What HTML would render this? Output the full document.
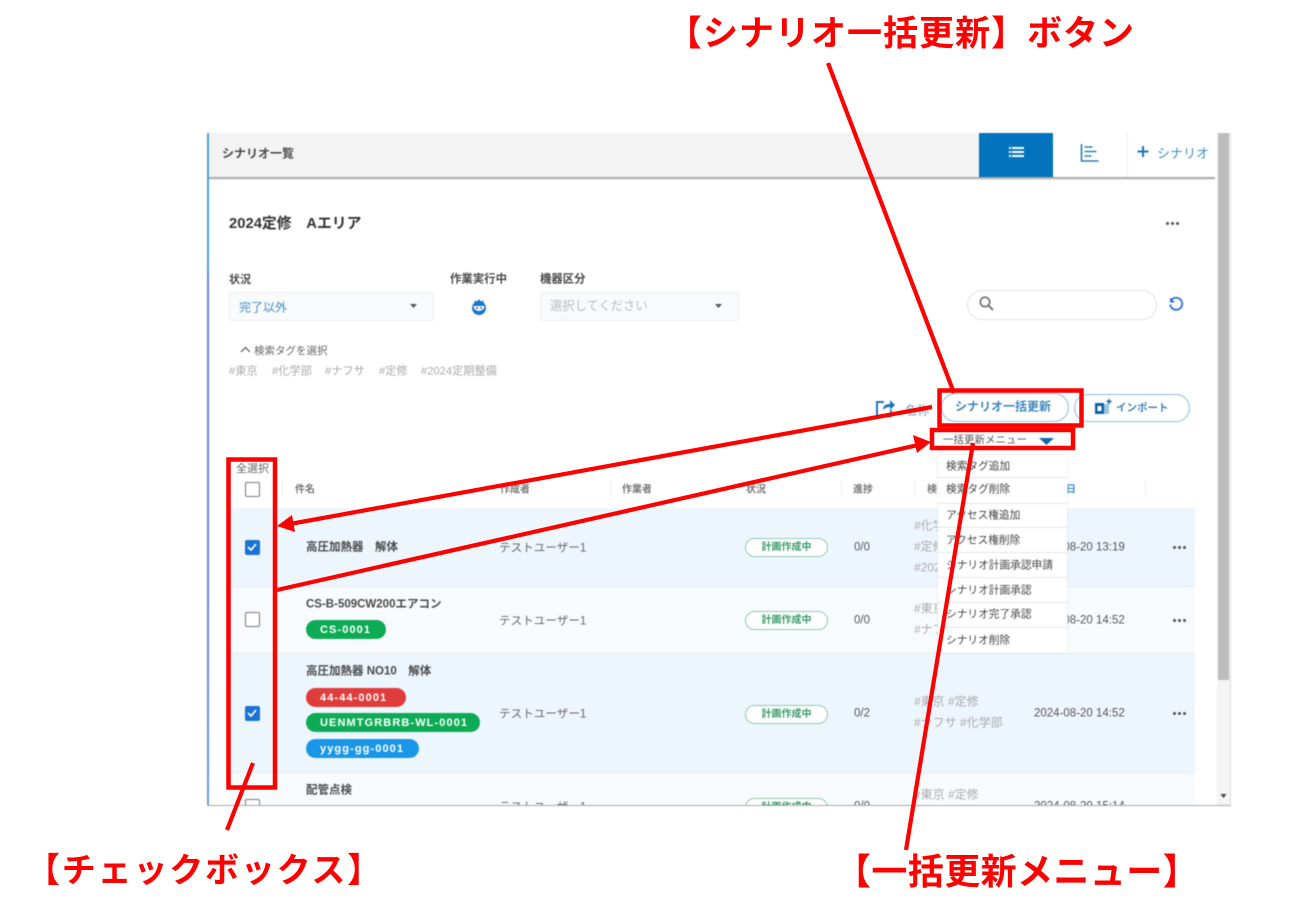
<!DOCTYPE html>
<html lang="ja"><head><meta charset="utf-8"><title>シナリオ一覧</title>
<style>
html,body{margin:0;padding:0;background:#fff;width:1293px;height:916px;overflow:hidden}
*{box-sizing:border-box}
body{position:relative;font-family:"Liberation Sans","Noto Sans CJK JP",sans-serif;color:#444}
.ab,.t{position:absolute}
.t{white-space:pre;line-height:1;font-size:11px;transform:translateY(calc(-50% + 1.3px))}
#win{position:absolute;left:0;top:0;width:1293px;height:916px;filter:blur(.5px)}
#clip{position:absolute;left:207px;top:133px;width:1024px;height:673px;overflow:hidden;background:#fff;border-bottom:1px solid #aaa;border-right:1px solid #ddd}
#in{position:absolute;left:-207px;top:-133px;width:1293px;height:916px}
.b{font-weight:700;color:#4a4a4a}
.hd{color:#777;font-size:10px;font-weight:700}
.sep{position:absolute;width:1px;background:#eee;top:481px;height:16px}
.row{position:absolute;left:229px;width:966px;border-bottom:1px solid #e6ebf0}
.cb{position:absolute;left:245px;width:15px;height:15px;border:1.5px solid #777;border-radius:2px;background:#fff}
.cb.on{background:#1a73d4;border-color:#1a73d4}
.chip{position:absolute;left:306px;height:19px;border-radius:10px;color:#fff;font-weight:700;font-size:11px;letter-spacing:1.1px;line-height:20px;padding-left:14px}
.st{position:absolute;left:745px;width:83px;height:19px;border:1.5px solid #94c8ae;border-radius:10px;background:#fff;text-align:center;color:#3b9c6c;font-size:10px;line-height:18px;font-weight:700}
.tag{color:#aaa;font-size:12px}
.dt{color:#555;font-size:11.5px}
.kb{position:absolute;width:14px;height:3px;background:radial-gradient(circle at 1.5px 1.5px,#555 1.4px,transparent 1.6px) 0 0/5px 3px repeat-x}
#menu{position:absolute;left:938px;top:455px;width:129px;height:198px;background:#fff;box-shadow:0 0 2px #ddd}
.mi{position:absolute;left:8px;font-size:10.7px;color:#444;white-space:pre;line-height:1;transform:translateY(calc(-50% + 1px))}
.ml{position:absolute;left:0;width:129px;height:1px;background:#e4e4e4}
.ann{position:absolute;color:#f00;font-weight:700;font-family:"Noto Sans CJK JP",sans-serif;white-space:pre;line-height:1;transform:translateY(-50%)}
</style></head><body>
<div id="win">
<div id="clip"><div id="in">
  <div class="ab" style="left:207px;top:133px;width:772px;height:44px;background:#f3f3f3"></div>
  <div class="ab" style="left:979px;top:133px;width:74px;height:44px;background:#0473bd"></div>
  <div class="ab" style="left:1127px;top:133px;width:1px;height:44px;background:#eee"></div>
  <div class="ab" style="left:209px;top:177px;width:1006px;height:3px;background:linear-gradient(#999,#ccc 70%,#fff)"></div>
  <div class="ab" style="left:1217px;top:133px;width:14px;height:673px;background:#f4f4f4"></div>
  <div class="ab" style="left:1218px;top:133px;width:11px;height:547px;background:#bdbdbd"></div>
  <svg class="ab" style="left:1218px;top:790px" width="11" height="12"><path d="M2.5 4h6l-3 4z" fill="#444"/></svg>
  <div class="t" style="left:222px;top:152px;font-size:12px;font-weight:700;color:#4a4a4a">シナリオ一覧</div>
  <svg class="ab" style="left:1007px;top:145px" width="18" height="15"><g fill="#fff"><rect x="2" y="2" width="2" height="2"/><rect x="5" y="2" width="12" height="2"/><rect x="2" y="6" width="2" height="2"/><rect x="5" y="6" width="12" height="2"/><rect x="2" y="10" width="2" height="2"/><rect x="5" y="10" width="12" height="2"/></g></svg>
  <svg class="ab" style="left:1079px;top:142px" width="22" height="21"><path d="M2.5 2v17h17M5.500 5h8M5.500 9.500h12M5.500 14h7" stroke="#2a7fb8" stroke-width="1.600" fill="none"/></svg>
  <svg class="ab" style="left:1136px;top:145px" width="14" height="14"><path d="M7 1v11M1.500 6.500h11" stroke="#1a76b8" stroke-width="2" fill="none"/></svg>
  <div class="t" style="left:1157px;top:152px;font-size:13px;color:#3d8fc4">シナリオ</div>

  <div class="t" style="left:229px;top:223px;font-size:14.800px;font-weight:700;color:#333">2024定修　Aエリア</div>
  <div class="kb" style="left:1166px;top:222px"></div>

  <div class="t b" style="left:229px;top:279px">状況</div>
  <div class="t b" style="left:450px;top:279px;font-size:11.400px">作業実行中</div>
  <div class="t b" style="left:540px;top:279px;font-size:11.400px">機器区分</div>
  <div class="ab" style="left:229px;top:292px;width:205px;height:29px;background:#f9fafb;border:1px solid #eee;border-radius:3px"></div>
  <div class="t" style="left:239px;top:306px;font-size:12px;color:#3d8fd0">完了以外</div>
  <svg class="ab" style="left:409px;top:303px" width="10" height="6"><path d="M1 1h7l-3.500 4z" fill="#555"/></svg>
  <svg class="ab" style="left:470px;top:297px" width="18" height="19"><circle cx="9" cy="11" r="7" fill="#1a76c8"/><path d="M4 7l1-4 2 2 2-3 2 3 2-2 1 4z" fill="#1a76c8"/><path d="M3.500 9h11a5.500 5 0 0 1-11 0z" fill="#fff"/><circle cx="7" cy="11" r="1" fill="#1a76c8"/><circle cx="11" cy="11" r="1" fill="#1a76c8"/></svg>
  <div class="ab" style="left:540px;top:292px;width:199px;height:29px;background:#f9fafb;border:1px solid #eee;border-radius:3px"></div>
  <div class="t" style="left:550px;top:305px;font-size:12.300px;color:#bbb">選択してください</div>
  <svg class="ab" style="left:714px;top:303px" width="10" height="6"><path d="M1 1h7l-3.500 4z" fill="#555"/></svg>

  <div class="ab" style="left:967px;top:290px;width:190px;height:30px;border:1px solid #e6e0e0;border-radius:15px;background:#fff"></div>
  <svg class="ab" style="left:978px;top:295px" width="18" height="18"><circle cx="7" cy="7" r="4.700" fill="none" stroke="#666" stroke-width="1.500"/><path d="M10.500 10.500l4.500 4.500" stroke="#666" stroke-width="1.800"/></svg>
  <svg class="ab" style="left:1167px;top:295px" width="18" height="18"><path d="M4.500 5a6 6 0 1 1-1.300 4.500" fill="none" stroke="#2a6fe0" stroke-width="1.800"/><path d="M3 2.500v5h5z" fill="#2a6fe0"/></svg>

  <svg class="ab" style="left:240px;top:346px" width="11" height="8"><path d="M1 6l4.500-4.500L10 6" fill="none" stroke="#555" stroke-width="1.200"/></svg>
  <div class="t" style="left:254px;top:350px;font-size:10.500px;color:#666">検索タグを選択</div>
  <div class="t" style="left:229px;top:371px;font-size:11.200px;color:#aaa">#東京</div>
  <div class="t" style="left:272px;top:371px;font-size:11.200px;color:#aaa">#化学部</div>
  <div class="t" style="left:325px;top:371px;font-size:11.200px;color:#aaa">#ナフサ</div>
  <div class="t" style="left:379px;top:371px;font-size:11.200px;color:#aaa">#定修</div>
  <div class="t" style="left:421px;top:371px;font-size:11.200px;color:#aaa">#2024定期整備</div>

  <svg class="ab" style="left:875px;top:398px" width="22" height="21"><path d="M9 4H2v14h14v-6" fill="none" stroke="#1a76b8" stroke-width="2"/><path d="M8 12c0-4 2-6 7-6V2l5 5-5 5V9c-3 0-5 1-7 3z" fill="#1a76b8"/></svg>
  <div class="t" style="left:905px;top:409px;font-size:12px;color:#6a9cc0">名称</div>
  <div class="ab" style="left:941px;top:393px;width:128px;height:29px;border:1.500px solid #8cbce0;border-radius:15px;background:#fff"></div>
  <div class="t" style="left:955px;top:405px;font-size:12px;font-weight:700;color:#3d87bd">シナリオ一括更新</div>
  <div class="ab" style="left:1074px;top:394px;width:116px;height:28px;border:1.500px solid #8cbce0;border-radius:15px;background:#fff"></div>
  <svg class="ab" style="left:1094px;top:398px" width="20" height="20"><rect x="1" y="5" width="9" height="11" fill="#0c64a8"/><rect x="10" y="6" width="5" height="10" fill="#9cc4e0"/><rect x="3.500" y="8" width="4" height="5" fill="#fff"/><path d="M15 1v5M12.500 3.500h5" stroke="#0c64a8" stroke-width="1.500"/></svg>
  <div class="t" style="left:1116px;top:407px;font-size:10.500px;font-weight:700;color:#3d87bd">インポート</div>

  <div class="ab" style="left:938px;top:430px;width:129px;height:20px;background:#fff;box-shadow:0 0 2px #ddd"></div>
  <div class="t" style="left:943px;top:439px;font-size:10.500px;color:#555">一括更新メニュー</div>
  <svg class="ab" style="left:1039px;top:437px" width="15" height="9"><path d="M0 1h15l-7.500 7z" fill="#1468a8"/></svg>

  <div class="t" style="left:236px;top:468px;color:#666">全選択</div>
  <div class="cb" style="top:482px"></div>
  <div class="sep" style="left:282px"></div><div class="sep" style="left:610px"></div><div class="sep" style="left:733px"></div><div class="sep" style="left:841px"></div><div class="sep" style="left:914px"></div><div class="sep" style="left:1145px"></div>
  <div class="t hd" style="left:295px;top:489px">件名</div>
  <div class="t hd" style="left:500px;top:489px">作成者</div>
  <div class="t hd" style="left:622px;top:489px">作業者</div>
  <div class="t hd" style="left:746px;top:489px">状況</div>
  <div class="t hd" style="left:853px;top:489px">進捗</div>
  <div class="t hd" style="left:927px;top:489px">検</div>
  <div class="t hd" style="left:1066px;top:489px;color:#3d8fd0">日</div>

  <div class="row" style="top:508px;height:79px;background:#eef6fd"></div>
  <div class="row" style="top:587px;height:67px;background:#f8fbfe"></div>
  <div class="row" style="top:654px;height:119px;background:#eef6fd"></div>
  <div class="row" style="top:773px;height:60px;background:#f8fbfe"></div>

  <div class="cb on" style="top:540px"><svg width="12" height="12" style="display:block"><path d="M2 6l3 3 5-6" stroke="#fff" stroke-width="1.700" fill="none"/></svg></div>
  <div class="cb" style="top:612px"></div>
  <div class="cb on" style="top:706px"><svg width="12" height="12" style="display:block"><path d="M2 6l3 3 5-6" stroke="#fff" stroke-width="1.700" fill="none"/></svg></div>
  <div class="cb" style="top:799px"></div>

  <div class="t b" style="left:306px;top:547px;font-size:11.500px">高圧加熱器　解体</div>
  <div class="t b" style="left:306px;top:604px;font-size:11.500px">CS-B-509CW200エアコン</div>
  <div class="chip" style="top:620px;width:80px;background:#0dab55">CS-0001</div>
  <div class="t b" style="left:306px;top:671px;font-size:11.500px">高圧加熱器 NO10　解体</div>
  <div class="chip" style="top:688px;width:100px;background:#e03c3c">44-44-0001</div>
  <div class="chip" style="top:713px;width:174px;background:#0dab55">UENMTGRBRB-WL-0001</div>
  <div class="chip" style="top:739px;width:113px;background:#1a96e8">yygg-gg-0001</div>
  <div class="t b" style="left:306px;top:790px;font-size:11.500px">配管点検</div>

  <div class="t" style="left:499px;top:547px;font-size:11.600px;color:#666">テストユーザー1</div>
  <div class="t" style="left:499px;top:620px;font-size:11.600px;color:#666">テストユーザー1</div>
  <div class="t" style="left:499px;top:713px;font-size:11.600px;color:#666">テストユーザー1</div>
  <div class="t" style="left:499px;top:806px;font-size:11.600px;color:#666">テストユーザー1</div>

  <div class="st" style="top:538px">計画作成中</div>
  <div class="st" style="top:611px">計画作成中</div>
  <div class="st" style="top:705px">計画作成中</div>
  <div class="st" style="top:798px">計画作成中</div>

  <div class="t dt" style="left:854px;top:547px">0/0</div>
  <div class="t dt" style="left:854px;top:620px">0/0</div>
  <div class="t dt" style="left:854px;top:713px">0/2</div>
  <div class="t dt" style="left:854px;top:806px">0/0</div>

  <div class="t tag" style="left:914px;top:524px">#化学部</div>
  <div class="t tag" style="left:914px;top:545px">#定修</div>
  <div class="t tag" style="left:914px;top:566px">#2024定期整備</div>
  <div class="t tag" style="left:914px;top:607px">#東京</div>
  <div class="t tag" style="left:914px;top:628px">#ナフサ</div>
  <div class="t tag" style="left:914px;top:700px">#東京 #定修</div>
  <div class="t tag" style="left:914px;top:721px">#ナフサ #化学部</div>
  <div class="t tag" style="left:914px;top:793px">#東京 #定修</div>

  <div class="t dt" style="left:1034px;top:547px">2024-08-20 13:19</div>
  <div class="t dt" style="left:1034px;top:620px">2024-08-20 14:52</div>
  <div class="t dt" style="left:1034px;top:713px">2024-08-20 14:52</div>
  <div class="t dt" style="left:1034px;top:806px">2024-08-20 15:14</div>

  <div class="kb" style="left:1173px;top:546px"></div>
  <div class="kb" style="left:1173px;top:619px"></div>
  <div class="kb" style="left:1173px;top:712px"></div>

  <div id="menu">
    <div class="mi" style="top:11px">検索タグ追加</div>
    <div class="ml" style="top:22px"></div>
    <div class="mi" style="top:34px">検索タグ削除</div>
    <div class="ml" style="top:48px"></div>
    <div class="mi" style="top:60px">アクセス権追加</div>
    <div class="ml" style="top:72px"></div>
    <div class="mi" style="top:85px">アクセス権削除</div>
    <div class="ml" style="top:97px"></div>
    <div class="mi" style="top:110px">シナリオ計画承認申請</div>
    <div class="ml" style="top:122px"></div>
    <div class="mi" style="top:135px">シナリオ計画承認</div>
    <div class="ml" style="top:147px"></div>
    <div class="mi" style="top:159px">シナリオ完了承認</div>
    <div class="ml" style="top:172px"></div>
    <div class="mi" style="top:185px">シナリオ削除</div>
  </div>
  <div class="ab" style="left:207px;top:133px;width:2px;height:673px;background:linear-gradient(#4aa0d8 0,#4aa0d8 20%,#6a80dc 22%,#6a80dc 70%,#6a9cdc 100%)"></div>
</div></div>
</div>

<svg class="ab" style="left:0;top:0;filter:blur(.3px)" width="1293" height="916">
  <g fill="none" stroke="#f00" stroke-width="4.500">
    <rect x="939.500" y="390.500" width="142" height="35"/>
    <rect x="932" y="430" width="141" height="18"/>
    <rect x="228.500" y="459.500" width="46.500" height="328"/>
  </g>
  <g stroke="#f00" stroke-width="4.200" fill="none">
    <path d="M828 63L954 393"/>
    <path d="M932 407L290 524"/>
    <path d="M277 590L918 445"/>
    <path d="M973 443L906 850"/>
    <path d="M253 763L227 830"/>
  </g>
  <path d="M277 526L292 515L295 532z" fill="#f00"/>
  <path d="M931 442L913 435L917 453z" fill="#f00"/>
</svg>
<div class="ann" style="left:667px;top:31px;font-size:35px;letter-spacing:1px">【シナリオ一括更新】ボタン</div>
<div class="ann" style="left:26px;top:868px;font-size:34px;letter-spacing:1.800px">【チェックボックス】</div>
<div class="ann" style="left:835px;top:869px;font-size:36px;letter-spacing:.4px">【一括更新メニュー】</div>
</body></html>
